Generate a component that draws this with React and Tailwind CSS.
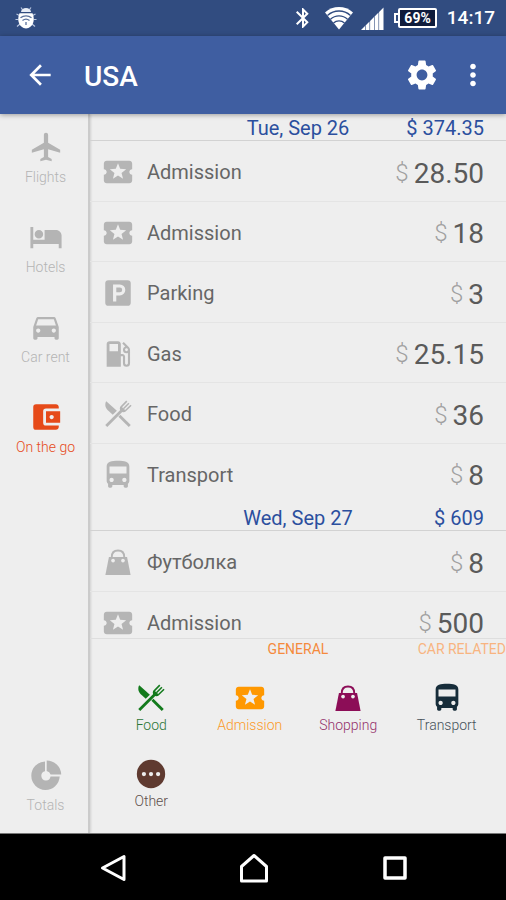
import { useState } from "react";
import { MdAccountBalanceWallet, MdArrowBack, MdBluetooth, MdDirectionsBus, MdDirectionsCar, MdHotel, MdLocalActivity, MdLocalAirport, MdLocalGasStation, MdMoreVert, MdSettings } from "react-icons/md";

function ParkingIcon({ size }) {
	return (
		<svg width={size} height={size} viewBox="0 0 24 24" fill="currentColor">
			<path fillRule="evenodd" d="M5.2 3h13.6A2.2 2.2 0 0 1 21 5.2v13.6a2.2 2.2 0 0 1-2.2 2.2H5.2A2.2 2.2 0 0 1 3 18.8V5.2A2.2 2.2 0 0 1 5.2 3zM8.5 6v12h2.3v-4.3h2.5a3.85 3.85 0 0 0 0-7.7zM10.8 8.2h2.5a1.65 1.65 0 0 1 0 3.3h-2.5z" />
		</svg>
	);
}

function FoodIcon({ size }) {
	return (
		<svg width={size} height={size} viewBox="0 0 24 24" fill="none" stroke="currentColor">
			{/* knife */}
			<path d="M3.7 3C2.5 5 3 7.5 4.6 9.1l3.7 3.5 2.9-2.9z" fill="currentColor" stroke="none" />
			<path d="M13 13.2l7.3 7.3" strokeWidth="2" />
			{/* fork */}
			<path d="M3.7 20.5L15 9.2" strokeWidth="2" />
			<path d="M18.2 2.9l-3.6 3.7c-.9.9-.9 2.1-.2 2.9.8.8 2.1.8 3 0l3.8-3.7M19.7 4.4l-3.9 3.9" strokeWidth="1.1" />
			<path d="M14.3 7.3c-.5.8-.4 1.7.2 2.3.6.6 1.6.6 2.3.1z" fill="currentColor" strokeWidth="1" />
		</svg>
	);
}

function BagIcon({ size }) {
	return (
		<svg width={size} height={size} viewBox="0 0 24 24" fill="none">
			<path d="M7.6 8.5C7.6 5.5 9.4 3.9 12 3.9s4.4 1.6 4.4 4.6" stroke="currentColor" strokeWidth="1.3" />
			<path d="M5.6 8.5h12.8l2.5 12.7H3.1z" fill="currentColor" />
			<circle cx="8.5" cy="11" r="1.3" fill="#eeeeee" />
			<circle cx="15.5" cy="11" r="1.3" fill="#eeeeee" />
		</svg>
	);
}

function OtherIcon({ size }) {
	return (
		<svg width={size} height={size} viewBox="0 0 24 24">
			<circle cx="12" cy="12" r="10" fill="currentColor" />
			<circle cx="7" cy="12" r="1.5" fill="#eeeeee" />
			<circle cx="12" cy="12" r="1.5" fill="#eeeeee" />
			<circle cx="17" cy="12" r="1.5" fill="#eeeeee" />
		</svg>
	);
}

function TotalsIcon({ size }) {
	return (
		<svg width={size} height={size} viewBox="0 0 34 34" fill="currentColor">
			<path d="M16 3.5A14.2 14.2 0 1 0 30.7 18.5h-9.2a4.6 4.6 0 1 1-5.5-5.2z" />
			<path d="M17.7 2.5A14.5 14.5 0 0 1 32.2 16.5H21.6a5 5 0 0 0-3.9-3.6z" />
		</svg>
	);
}

function BugIcon() {
	return (
		<svg width="22" height="24" viewBox="0 0 22 24" fill="none">
			<path d="M6 1.5l1.5 2M16 1.5l-1.5 2M1.5 8l3 1.5M20.5 8l-3 1.5M.5 13.5h3M21.5 13.5h-3M2 20.5l3-2.5M20 20.5l-3-2.5" stroke="#b9c6df" strokeWidth="1.2" />
			<path d="M6 6a5 4 0 0 1 10 0z" fill="#e8edf6" />
			<path d="M4.5 7.2h13C20.5 14 18 21.8 11 22.5 4 21.8 1.5 14 4.5 7.2z" fill="white" />
			<path d="M5.5 11.8a8.5 8.5 0 0 1 11 0M7.5 14.6a5.5 5.5 0 0 1 7 0M11 16v3" stroke="#5b719c" strokeWidth="1.3" />
		</svg>
	);
}

function WifiIcon() {
	return (
		<svg width="28" height="24" viewBox="0 0 28 24">
			<path d="M0 6.5C8-.8 20-.8 28 6.500L14 23.5z" fill="white" />
			<path d="M2.5 9.5a17 17 0 0 1 23 0M5.5 13.2a12.5 12.5 0 0 1 17 0M8.5 17a8 8 0 0 1 11 0" stroke="#314c80" strokeWidth="1.3" fill="none" />
		</svg>
	);
}

function SignalIcon() {
	return (
		<svg width="23" height="23" viewBox="0 0 23 23" fill="white">
			<path d="M0 23l4-4v4zM4.600 18.400l3.900-3.900V23H4.600zM9.100 13.900L13 10v13H9.100zM13.600 9.400l3.900-3.900V23h-3.900zM18.100 4.900L22.500.5V23h-4.400z" />
		</svg>
	);
}

const sections = [
	{ name: "Flights", icon: MdLocalAirport },
	{ name: "Hotels", icon: MdHotel },
	{ name: "Car rent", icon: MdDirectionsCar },
	{ name: "On the go", icon: MdAccountBalanceWallet },
];

const days = [
	{
		date: "Tue, Sep 26",
		total: "374.35",
		items: [
			{ name: "Admission", icon: MdLocalActivity, amount: "28.50" },
			{ name: "Admission", icon: MdLocalActivity, amount: "18" },
			{ name: "Parking", icon: ParkingIcon, amount: "3" },
			{ name: "Gas", icon: MdLocalGasStation, amount: "25.15" },
			{ name: "Food", icon: FoodIcon, amount: "36" },
			{ name: "Transport", icon: MdDirectionsBus, amount: "8" },
		],
	},
	{
		date: "Wed, Sep 27",
		total: "609",
		items: [
			{ name: "Футболка", icon: BagIcon, amount: "8" },
			{ name: "Admission", icon: MdLocalActivity, amount: "500" },
		],
	},
];

const categories = [
	{ name: "Food", icon: FoodIcon, iconColor: "text-[#137a1c]", color: "text-[#2c7636]" },
	{ name: "Admission", icon: MdLocalActivity, iconColor: "text-[#ff9800]", color: "text-[#fb9a2a]" },
	{ name: "Shopping", icon: BagIcon, iconColor: "text-[#8c0d57]", color: "text-[#94306b]" },
	{ name: "Transport", icon: MdDirectionsBus, iconColor: "text-[#172d3a]", color: "text-[#46525a]" },
	{ name: "Other", icon: OtherIcon, iconColor: "text-[#5f3a30]", color: "text-[#5f504c]" },
];

function SectionButton({ name, icon: Icon, active, onClick }) {
	return (
		<button type="button" onClick={onClick} className={`flex w-full flex-col items-center gap-[3px] text-sm leading-5 font-light ${active ? "text-[#e64a19]" : "text-[#b4b4b4]"}`}>
			<Icon size={34} />
			{name}
		</button>
	);
}

function Day({ date, total, items }) {
	return (
		<section>
			<h2 className="grid h-[27px] grid-cols-3 items-end border-b border-[#d2d2d2] text-xl leading-6 text-[#2b4f9e]">
				<span className="col-start-2 text-center">{date}</span>
				<span className="pr-[22px] text-right">$ {total}</span>
			</h2>
			<ul>
				{items.map((item, i) => (
					<li key={i} className="flex items-center border-b border-[#e4e4e4] pt-0.5 pr-[22px] pl-[11px] last:border-transparent odd:h-[61px] even:h-[60px]">
						<span className="text-[#b5b5b5]">
							<item.icon size={34} />
						</span>
						<span className="ml-3 flex-1 text-xl text-[#666666]">{item.name}</span>
						<span className="flex items-center gap-[5px] pt-[3px] text-[28px] leading-8 text-[#5a5a5a]">
							<span className="pb-0.5 text-2xl leading-8 font-light text-[#a0a0a0]">$</span>
							{item.amount}
						</span>
					</li>
				))}
			</ul>
		</section>
	);
}

export default function App() {
	const [section, setSection] = useState("On the go");

	return (
		<div className="flex h-screen flex-col bg-[#eeeeee] font-['Roboto',sans-serif]">
			{/* Status bar */}
			<div className="flex h-9 shrink-0 items-center bg-[#314c80] pr-[11px] pl-[15px] text-white">
				<BugIcon />
				<div className="ml-auto flex items-center gap-2">
					<MdBluetooth size={24} />
					<div className="ml-0.5">
						<WifiIcon />
					</div>
					<SignalIcon />
					<div className="ml-0.5 flex items-center">
						<span className="h-2.5 w-1 border-2 border-r-0 border-white" />
						<span className="rounded-xs border-2 border-white bg-[#0f1c3c] px-1 text-sm leading-4 font-bold">69%</span>
					</div>
					<span className="ml-0.5 text-[19px] font-medium">14:17</span>
				</div>
			</div>

			{/* App bar */}
			<header className="z-10 flex h-[78px] shrink-0 items-center bg-[#3f5ea1] pr-4 pl-6 text-white shadow-[0_1px_5px_rgba(0,0,0,0.35)]">
				<button type="button" aria-label="Back">
					<MdArrowBack size={32} />
				</button>
				<h1 className="ml-7 flex-1 pt-1 text-[28px] font-medium">USA</h1>
				<button type="button" aria-label="Settings">
					<MdSettings size={36} />
				</button>
				<button type="button" aria-label="More options" className="ml-4">
					<MdMoreVert size={34} />
				</button>
			</header>

			<div className="flex min-h-0 flex-1">
				<nav className="flex w-[90px] shrink-0 flex-col border-r-2 border-[#cbcbcb] pt-4 pb-[18px] pl-[3px] shadow-[1px_0_2px_rgba(0,0,0,0.12)]">
					<div className="flex flex-col gap-[33px]">
						{sections.map((s) => (
							<SectionButton key={s.name} {...s} active={section === s.name} onClick={() => setSection(s.name)} />
						))}
					</div>
					<div className="mt-auto">
						<SectionButton name="Totals" icon={TotalsIcon} active={section === "Totals"} onClick={() => setSection("Totals")} />
					</div>
				</nav>

				<main className="flex min-w-0 flex-1 flex-col">
					<div className="min-h-0 flex-1 overflow-hidden">
						{days.map((day) => (
							<Day key={day.date} {...day} />
						))}
					</div>

					{/* Category picker */}
					<div className="shrink-0 border-t border-[#dedede] pb-[22px]">
						<div className="grid grid-cols-3 text-sm leading-5 whitespace-nowrap">
							<button type="button" className="col-start-2 text-[#f58a3c]">
								GENERAL
							</button>
							<button type="button" className="text-right text-[#f8b480]">
								CAR RELATED
							</button>
						</div>
						<div className="mt-[22px] grid grid-cols-4 gap-y-[22px] pr-2.5 pl-3">
							{categories.map((c) => (
								<button key={c.name} type="button" className={`flex flex-col items-center text-sm leading-5 font-light ${c.color}`}>
									<span className={c.iconColor}>
										<c.icon size={34} />
									</span>
									{c.name}
								</button>
							))}
						</div>
					</div>
				</main>
			</div>

			{/* System navigation */}
			<div className="flex h-[67px] shrink-0 items-center justify-center gap-[107px] border-t border-[#777777] bg-black pt-0.5 pl-0.5">
				<button type="button" aria-label="Back">
					<svg width="34" height="34" viewBox="0 0 34 34" fill="none" stroke="white" strokeWidth="3" strokeLinejoin="round">
						<path d="M28 5.5v23L6.500 17z" />
					</svg>
				</button>
				<button type="button" aria-label="Home">
					<svg width="34" height="34" viewBox="0 0 34 34" fill="none" stroke="white" strokeWidth="3" strokeLinejoin="round">
						<path d="M17 4.5l12.5 11V30h-25V15.5z" />
					</svg>
				</button>
				<button type="button" aria-label="Recent apps">
					<svg width="34" height="34" viewBox="0 0 34 34" fill="none" stroke="white" strokeWidth="3.5" strokeLinejoin="round">
						<path d="M7 7h20v20H7z" />
					</svg>
				</button>
			</div>
		</div>
	);
}
